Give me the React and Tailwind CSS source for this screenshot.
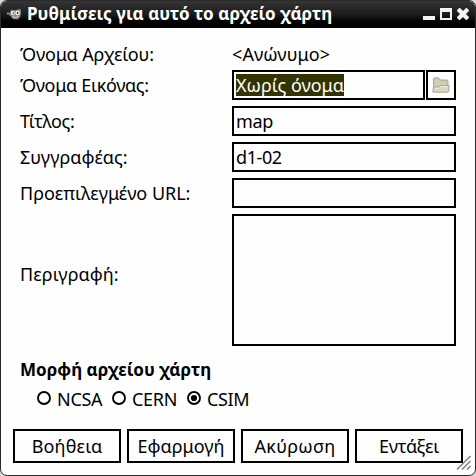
import React from "react";

function Mascot() {
  return (
    <svg className="mt-[7px] h-3 w-[15px] shrink-0" viewBox="0 0 15 12">
      <path d="M3 3.4 L4.6 1.6 L7 2.2 L11 1.6 L13.6 .8 L14 5 L13.2 9 L10.5 11.4 L6 11 L4 8.6 L2 7 Z" fill="#8a8882" />
      <circle cx="1" cy="5.6" r="1" fill="#b5b5b0" />
      <circle cx="6" cy="5" r="2" fill="#f8f8f4" />
      <circle cx="10.6" cy="5" r="2.3" fill="#f8f8f4" />
      <circle cx="6.4" cy="5" r="0.8" fill="#111" />
      <circle cx="10.6" cy="5" r="0.9" fill="#111" />
      <path d="M5 8.8 Q8 10.2 11.5 8.6" stroke="#c9c7c0" strokeWidth="1" fill="none" />
    </svg>
  );
}

function TitleBar() {
  return (
    <header className="-mt-px flex h-7 shrink-0 items-start border-t border-[#858585] bg-linear-to-b from-[#353535] via-[#1c1c1c] to-black pl-[6px]">
      <Mascot />
      <h1 className="ml-[5px] h-[26px] flex-1 whitespace-nowrap text-[17px] leading-[26px] font-bold tracking-[0.06px] text-white">
        Ρυθμίσεις για αυτό το αρχείο χάρτη
      </h1>
      <div className="mr-[6px] mt-[7px] flex h-3 items-end gap-[5px]">
        <span className="h-1 w-3 bg-[#f4f4f4]" />
        <span className="h-3 w-3 border-2 border-t-4 border-[#f4f4f4]" />
        <svg className="h-3 w-3" viewBox="0 0 12 12">
          <path d="M2.6 2.6 L9.4 9.4 M9.4 2.6 L2.6 9.4" stroke="#f4f4f4" strokeWidth="4.2" strokeLinecap="square" strokeLinejoin="round" />
        </svg>
      </div>
    </header>
  );
}

function Row({ label, tracking, children }) {
  return (
    <div className="flex h-[30px] items-center">
      <span className={`w-[212px] shrink-0 whitespace-nowrap ${tracking}`}>{label}</span>
      {children}
    </div>
  );
}

function Field({ children }) {
  return <div className="flex h-[30px] flex-1 items-center border-2 border-black pl-[2px]">{children}</div>;
}

function FolderIcon() {
  return (
    <svg className="h-4 w-[18px]" viewBox="0 0 18 16">
      <path d="M1.5 14 V2 Q1.5 .8 2.6 .8 H6.6 L8.2 3 H15 Q16 3 16 4 V14 Z" fill="#c9c9ae" stroke="#aaa992" />
      <path d="M2.5 8.5 V2.8 H6.5 L8 4.8 H14.8 V8.5" fill="#d0cfb6" />
      <path d="M1 15 L1.4 10.2 H7 L8.6 8.6 H17.2 L16.6 14.4 Q16.5 15.2 15.8 15.2 H1.8 Q1 15.2 1 14.4 Z" fill="#d8d7c0" stroke="#a9a892" />
      <path d="M2.5 11.2 H7.4 L9 9.6 H16" stroke="#efeee2" fill="none" />
    </svg>
  );
}

function Radio({ label, checked, tracking }) {
  return (
    <label className="flex w-[75px] items-center">
      <svg className="-mt-[2px] mr-[6px] h-[14px] w-[14px] shrink-0" viewBox="0 0 14 14">
        <circle cx="7" cy="7" r="6" fill="#fff" stroke="#000" strokeWidth="1.9" />
        {checked && <circle cx="7" cy="7" r="3.1" />}
      </svg>
      <span className={tracking}>{label}</span>
    </label>
  );
}

function Button({ label, tracking }) {
  return (
    <button className={`flex h-[34px] w-[108px] items-center justify-center border-2 border-black ${tracking}`}>
      {label}
    </button>
  );
}

export default function App() {
  return (
    <div className="h-[476px] w-[476px] overflow-hidden bg-[#d8d8d4] font-['Noto_Sans',sans-serif]">
      <div className="relative flex h-full flex-col overflow-hidden rounded-[7px] border border-[#2a2a2a] bg-[#fefefe] text-[18px] leading-6 text-black">
        <TitleBar />
        <main className="flex flex-col pl-[19px] pr-[19px] pt-[14px]">
          <div className="flex h-6 items-center">
            <span className="w-[212px] tracking-[-0.15px]">Όνομα Αρχείου:</span>
            <span className="tracking-[0.1px]">&lt;Ανώνυμο&gt;</span>
          </div>
          <div className="mt-1 flex flex-col gap-[6px]">
            <Row label="Όνομα Εικόνας:" tracking="tracking-[-0.3px]">
              <Field>
                <span className="h-[22px] w-[108px] whitespace-nowrap bg-[#333300] leading-[22px] tracking-[0.03px] text-[#fefefe]">
                  Χωρίς όνομα
                </span>
              </Field>
              <button className="ml-px flex h-[30px] w-[30px] items-center justify-center border-2 border-black">
                <FolderIcon />
              </button>
            </Row>
            <Row label="Τίτλος:" tracking="tracking-[-0.4px]">
              <Field><span className="tracking-[-0.4px]">map</span></Field>
            </Row>
            <Row label="Συγγραφέας:" tracking="tracking-[0.05px]">
              <Field><span className="tracking-[-0.4px]">d1-02</span></Field>
            </Row>
            <Row label="Προεπιλεγμένο URL:" tracking="tracking-[-0.02px]">
              <Field />
            </Row>
            <div className="flex h-[132px]">
              <span className="mt-[48px] w-[212px] tracking-[0.08px]">Περιγραφή:</span>
              <div className="flex-1 border-2 border-black" />
            </div>
          </div>
          <h2 className="mt-[12px] h-6 text-[17px] font-bold tracking-[0.03px]">Μορφή αρχείου χάρτη</h2>
          <div className="mt-[5px] flex h-6 pl-[17px]">
            <Radio label="NCSA" tracking="tracking-[-0.3px]" />
            <Radio label="CERN" tracking="tracking-[-0.3px]" />
            <Radio label="CSIM" tracking="tracking-[-0.4px]" checked />
          </div>
        </main>
        <footer className="mt-[18px] flex gap-[6px] pl-3">
          <Button label="Βοήθεια" tracking="tracking-[0.2px]" />
          <Button label="Εφαρμογή" tracking="tracking-[0px]" />
          <Button label="Ακύρωση" tracking="tracking-[0.25px]" />
          <Button label="Εντάξει" tracking="tracking-[-0.3px]" />
        </footer>
        <svg className="absolute right-[4px] bottom-[5px] h-[15px] w-[15px]" viewBox="0 0 15 15">
          <path d="M1 14.5 L14.5 1 M6 14.5 L14.5 6 M11 14.5 L14.5 11" stroke="#777" strokeWidth="1.3" />
        </svg>
      </div>
    </div>
  );
}
